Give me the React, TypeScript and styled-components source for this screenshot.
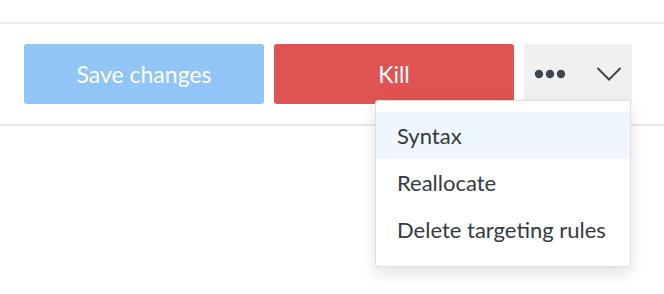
import React from "react";
import styled, { createGlobalStyle } from "styled-components";

const GlobalStyle = createGlobalStyle`
  body {
    margin: 0;
    background: #ffffff;
    font-family: "Source Sans Pro", "Lato", "Noto Sans", sans-serif;
  }
`;

const Page = styled.div`
  width: 664px;
  height: 294px;
  background: #fff;
  padding-top: 22px;
  box-sizing: border-box;
`;

const Toolbar = styled.div`
  display: flex;
  justify-content: flex-start;
  align-items: center;
  gap: 10px;
  padding: 20px 32px 20px 24px;
  border-top: 2px solid #e9e9e9;
  border-bottom: 2px solid #e9e9e9;
`;

const Button = styled.button<{ tone: "save" | "kill" }>`
  width: 240px;
  height: 60px;
  border: none;
  border-radius: 3px;
  font-family: inherit;
  font-size: 23px;
  color: #fff;
  cursor: pointer;
  background: ${(p) => (p.tone === "save" ? "#90c5f5" : "#e05353")};
`;

const DropWrap = styled.div`
  position: relative;
`;

const MoreButton = styled.button`
  width: 108px;
  height: 60px;
  border: none;
  background: #f0f0f0;
  display: flex;
  align-items: center;
  justify-content: space-between;
  padding: 0 10px 0 10px;
  cursor: pointer;
`;

const Menu = styled.ul`
  position: absolute;
  right: 1px;
  top: 56px;
  width: 254px;
  margin: 0;
  padding: 11px 0 13px;
  list-style: none;
  background: #fff;
  border: 1px solid #dedede;
  border-radius: 3px;
  box-shadow: 0 6px 16px rgba(0, 0, 0, 0.12);
`;

const Item = styled.li<{ active?: boolean }>`
  height: 47px;
  display: flex;
  align-items: center;
  padding-left: 21px;
  font-size: 22px;
  color: #333a40;
  background: ${(p) => (p.active ? "#eff6fe" : "transparent")};
`;

export default function App() {
  return (
    <Page>
      <GlobalStyle />
      <Toolbar>
        <Button tone="save">Save changes</Button>
        <Button tone="kill">Kill</Button>
        <DropWrap>
          <MoreButton>
            <svg width="34" height="10" viewBox="0 0 34 10">
              <circle cx="5" cy="5" r="4.2" fill="#3d4753" />
              <circle cx="16" cy="5" r="4.2" fill="#3d4753" />
              <circle cx="27" cy="5" r="4.2" fill="#3d4753" />
            </svg>
            <svg width="26" height="16" viewBox="0 0 26 16">
              <path d="M1.5 2 L13 13.5 L24.5 2" fill="none" stroke="#3d4753" strokeWidth="2" />
            </svg>
          </MoreButton>
          <Menu>
            <Item active>Syntax</Item>
            <Item>Reallocate</Item>
            <Item>Delete targeting rules</Item>
          </Menu>
        </DropWrap>
      </Toolbar>
    </Page>
  );
}
